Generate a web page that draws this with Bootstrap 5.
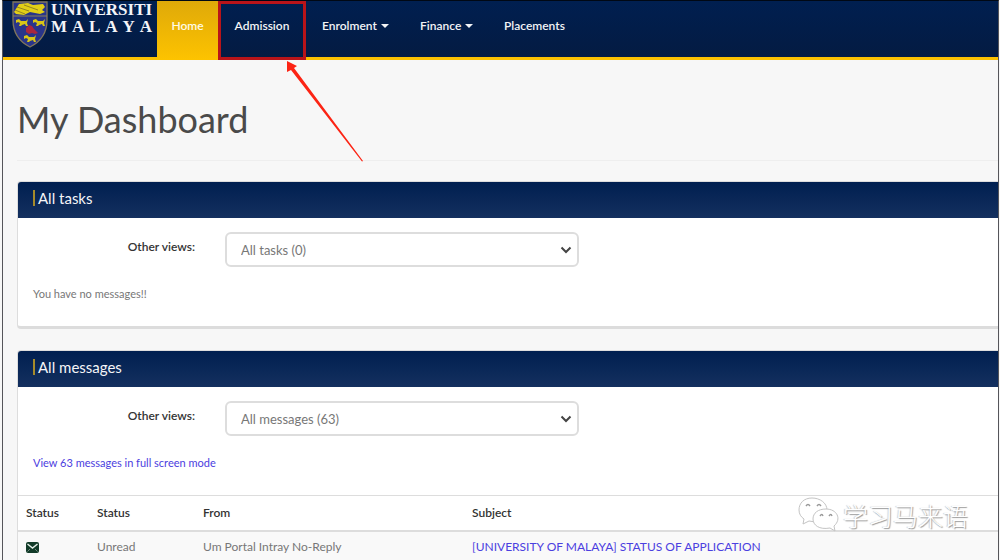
<!DOCTYPE html>
<html lang="en">
<head>
<meta charset="utf-8">
<meta name="viewport" content="width=device-width, initial-scale=1">
<title>My Dashboard</title>
<link href="https://cdn.jsdelivr.net/npm/bootstrap@5.3.0/dist/css/bootstrap.min.css" rel="stylesheet">
<style>
body{font-family:Lato,"Noto Sans CJK SC",sans-serif;font-size:12px;line-height:18px;color:#777;background:#f7f7f7}
.portal{margin:0 1px 0 2px;border:1px solid #55555a;border-top-color:#000814;border-bottom:0;min-height:100vh;overflow:hidden}
.topbar{background:linear-gradient(#001f50,#041b42);border-bottom:3px solid #fcc101;height:59px;padding:0}
.logo{width:154px;height:56px;padding-left:8px;gap:2px;color:#f3f4f8;font:bold 17px/17px "Liberation Serif",serif}
.logo:hover{color:#fff}
.wordmark{width:101px}
.menu{height:59px;margin-bottom:-3px;gap:0}
.menu .nav-link{height:59px;padding:16px 16px;color:#f3f4f6;font-weight:600;font-size:12px;line-height:18px}
.menu .nav-link.home{width:61px;padding-left:0;padding-right:0;text-align:center;background:linear-gradient(#dfa909,#fdc300);color:#fffbe5}
.menu .nav-link.marked{width:88px;text-align:center;padding:13px 0;border:3px solid #b91419}
.menu .wide-a{width:98px}
.menu .wide-b{width:84px}
.menu .dropdown-toggle::after{border-width:4px 4px 0;margin-left:4px;vertical-align:2px}
.main-area{padding:35px 0 0 14px}
.page-title{font-size:36px;line-height:48px;font-weight:400;color:#4a4a4a;margin:0;padding-bottom:17px;border-bottom:1px solid #eee}
.panel-box{border:1px solid #ddd;border-right:0;border-bottom:3px solid #dcdcdc;border-radius:4px 0 0 4px;background:#fff;margin-top:20px}
.panel-box + .panel-box{margin-top:21px}
.panel-head{height:36px;background:linear-gradient(#001f50,#14305f);border-radius:3px 0 0 0;padding:0 15px 4px;color:#f5f5f7}
.panel-head h2{font-size:15px;line-height:16px;font-weight:400;margin:0;padding-left:3px;border-left:2px solid #a58b2b}
.panel-main{padding:14px 15px 24px}
.views label{width:162px;text-align:right;color:#333;font-weight:600;margin-right:30px;padding-top:6px}
.views .form-select{width:354px;height:35px;border:2px solid #ddd;color:#777;font-size:13px;line-height:18px;padding:5px 14px;
background-image:url("data:image/svg+xml,%3csvg xmlns='http://www.w3.org/2000/svg' viewBox='0 0 12 8'%3e%3cpath d='M1.5 1.5 6 6l4.500-4.500' fill='none' stroke='%23444' stroke-width='2'/%3e%3c/svg%3e");background-size:12px 8px;background-position:right 5px center}
.note{font-size:11px;line-height:16px;margin-top:19px}
.note a,.mail a{color:#4b40e0;text-decoration:none}
.mail{margin:0;table-layout:fixed;color:#777;white-space:nowrap}
.mail th{border-top:1px solid #ddd;border-bottom:2px solid #ddd;color:#333;font-weight:600;padding:6px 8px 8px;height:35px;overflow:hidden}
.mail td{background:#f9f9f9;border-bottom:1px solid #ddd;color:#777;padding:6px 8px;height:29px}
.mail .c1{width:71px}.mail .c2{width:106px}.mail .c3{width:269px}.mail .c5{width:10px}
.arrow{position:absolute;left:286px;top:60px}
.channel{position:absolute;right:32px;top:497px;gap:4px;color:#fff;font:300 25px/36px "Noto Sans CJK SC",sans-serif;text-shadow:1px 1px 1px #999,-1px 0 1px #ccc}
</style>
</head>
<body class="position-relative overflow-x-hidden">
<div class="portal">
<nav class="navbar topbar flex-nowrap align-items-start justify-content-start" aria-label="Main">
  <a href="#" class="logo d-flex text-decoration-none flex-shrink-0" aria-label="Universiti Malaya">
    <svg width="38" height="48" viewBox="0 0 38 48" aria-hidden="true">
      <path d="M2 1h34v18c0 14-7 22-17 27C9 41 2 33 2 19z" fill="#29358a" stroke="#81765a" stroke-width="1.300"/>
      <path d="M3 11 8 3l9-1 5 2 10-1 2 3-3 3 3 2-5 2-10-2-6 3-8-1z" fill="#e2cf17"/>
      <path d="m6 6 12 4m-5-6 14 5M4 9l10 4" stroke="#948521"/>
      <path d="M2 15h34" stroke="#8b815b"/>
      <g fill="#d9c616"><path id="tiger" d="m5 19 3-1 2 2h5l2-2-1 4 1 3h-2l-1-2-3 1-1 1H8l1-3-2-1-2 1z"/><use href="#tiger" x="17"/><use href="#tiger" x="8" y="16"/></g>
      <path d="m15 27 3-3 3 1 2 3 4 4-3 1-3-1-3 1-3-2z" fill="#a9273e"/>
    </svg>
    <span class="wordmark d-flex flex-column">
      <span class="d-flex justify-content-between"><span>U</span><span>N</span><span>I</span><span>V</span><span>E</span><span>R</span><span>S</span><span>I</span><span>T</span><span>I</span></span>
      <span class="d-flex justify-content-between"><span>M</span><span>A</span><span>L</span><span>A</span><span>Y</span><span>A</span></span>
    </span>
  </a>
  <ul class="nav menu flex-nowrap">
    <li><a class="nav-link home" href="#">Home</a></li>
    <li><a class="nav-link marked" href="#">Admission</a></li>
    <li><a class="nav-link dropdown-toggle wide-a text-nowrap" href="#" data-bs-toggle="dropdown">Enrolment</a></li>
    <li><a class="nav-link dropdown-toggle wide-b text-nowrap" href="#" data-bs-toggle="dropdown">Finance</a></li>
    <li><a class="nav-link" href="#">Placements</a></li>
  </ul>
</nav>
<main class="main-area">
  <h1 class="page-title">My Dashboard</h1>
  <section class="panel-box">
    <div class="panel-head d-flex align-items-center"><h2>All tasks</h2></div>
    <div class="panel-main">
      <div class="views d-flex"><label for="tasks">Other views:</label>
        <select class="form-select" id="tasks"><option>All tasks (0)</option></select></div>
      <p class="note mb-0">You have no messages!!</p>
    </div>
  </section>
  <section class="panel-box">
    <div class="panel-head d-flex align-items-center"><h2>All messages</h2></div>
    <div class="panel-main">
      <div class="views d-flex"><label for="messages">Other views:</label>
        <select class="form-select" id="messages"><option>All messages (63)</option></select></div>
      <p class="note mb-0"><a href="#">View 63 messages in full screen mode</a></p>
    </div>
    <table class="table mail">
      <thead><tr><th class="c1">Status</th><th class="c2">Status</th><th class="c3">From</th><th>Subject</th><th class="c5"></th></tr></thead>
      <tbody><tr>
        <td><svg width="13" height="11" viewBox="0 0 13 11" role="img" aria-label="Unread mail"><rect width="13" height="11" rx="2" fill="#123b29"/><path d="m1.500 2 5 4 5-4" fill="none" stroke="#e4efe8" stroke-width="1.500"/><path d="M1.500 9.500 4 7M11.500 9.500 9 7" stroke="#6f8a7c"/></svg></td>
        <td>Unread</td><td>Um Portal Intray No-Reply</td><td><a href="#">[UNIVERSITY OF MALAYA] STATUS OF APPLICATION</a></td><td></td>
      </tr></tbody>
    </table>
  </section>
</main>
</div>
<svg class="arrow" width="80" height="103" viewBox="0 0 80 103" aria-hidden="true"><path d="m1 1 10 5-3 2 69 93-1 .5L5 10l-4 2z" fill="#fc2414"/></svg>
<div class="channel d-flex">
  <svg width="41" height="35" viewBox="0 0 41 35" aria-hidden="true"><g fill="#fff" stroke="#c4c4c4"><path d="M14 1C6 1 1 6 1 13c0 4 2 7 5 9l-1 5 6-3c13 3 18-3 18-11C29 6 22 1 14 1z"/><path d="M28 12c-8 0-13 4-13 10s6 11 17 9l5 3-1-5c8-7 3-17-8-17z"/></g><g fill="none" stroke="#999" stroke-width="1.400"><path d="M8 9q2-3 4 0m7 0q2-3 4 0M22 19q2-3 3 0m6 0q2-3 3 0"/></g></svg>
  <span>学习马来语</span>
</div>
<script src="https://cdn.jsdelivr.net/npm/bootstrap@5.3.0/dist/js/bootstrap.bundle.min.js"></script>
</body>
</html>
